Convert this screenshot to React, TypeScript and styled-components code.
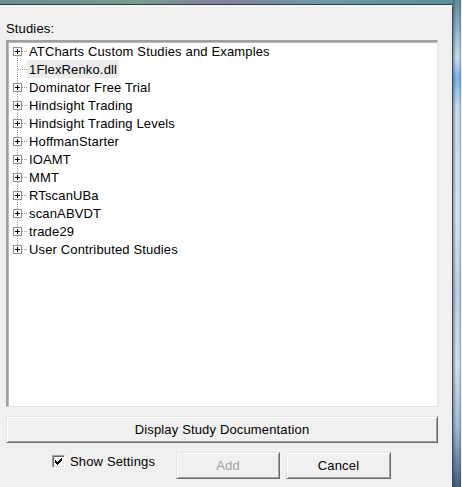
import React from 'react';
import styled, { createGlobalStyle } from 'styled-components';

const GlobalStyle = createGlobalStyle`
  html, body {
    margin: 0;
    padding: 0;
    background: #f0f0f0;
  }
  body {
    font-family: "Liberation Sans", Arial, sans-serif;
    font-size: 13px;
    letter-spacing: 0.15px;
    color: #000;
  }
`;

const Window = styled.div`
  width: 462px;
  height: 487px;
  display: flex;
  flex-direction: column;
  overflow: hidden;
`;

const TopFrame = styled.div`
  height: 4px;
  flex: none;
  background: linear-gradient(90deg, #6b8f92 0%, #7a9a8f 30%, #86819e 50%, #6f9aa0 70%, #5f8f96 100%);
  border-bottom: 1px solid #2e3d42;
  margin-right: 8px;
`;

const Body = styled.div`
  flex: 1;
  display: flex;
  min-height: 0;
`;

const Client = styled.div`
  width: 453px;
  flex: none;
  background: #f0f0f0;
  border-top: 1px solid #f8f8f8;
  border-right: 1px solid #3a4a50;
  box-sizing: border-box;
  padding: 15px 14px 0 6px;
  display: flex;
  flex-direction: column;
`;

const GlassStrip = styled.div`
  width: 8px;
  flex: none;
  margin-top: -5px;
  background:
    linear-gradient(90deg, rgba(40, 60, 80, 0.45) 0%, rgba(255, 255, 255, 0) 40%, rgba(255, 255, 255, 0) 70%, rgba(40, 60, 80, 0.35) 100%),
    linear-gradient(180deg, #5f8c96 0%, #8fb4c8 6%, #c9dcee 12%, #78b2ee 16%, #c6dbef 22%, #d3e3f2 45%, #b9cfe3 60%, #cddff0 75%, #9fb8cf 88%, #40607e 100%);
`;

const Label = styled.div`
  height: 15px;
  line-height: 15px;
  margin-bottom: 4px;
`;

const ListBox = styled.div`
  height: 367px;
  box-sizing: border-box;
  background: #fff;
  border-top: 2px solid #a0a0a0;
  border-left: 2px solid #a0a0a0;
  border-right: 1px solid #e3e3e3;
  border-bottom: 1px solid #e3e3e3;
  box-shadow: inset 1px 1px 0 #b9b9b9;
  display: flex;
  flex-direction: column;
`;

const Row = styled.div`
  height: 18px;
  display: flex;
  align-items: flex-start;
`;

const RowText = styled.span<{ $focused?: boolean }>`
  height: 16px;
  padding: 2px 2px 0;
  line-height: 16px;
  background: ${(p) => (p.$focused ? '#ececec' : 'transparent')};
  white-space: nowrap;
`;

const WideButton = styled.button`
  margin-top: 9px;
  height: 27px;
  width: 100%;
  font: inherit;
  letter-spacing: inherit;
  color: #000;
  background: #f0f0f0;
  border-top: 1px solid #e3e3e3;
  border-left: 1px solid #e3e3e3;
  border-right: 1px solid #696969;
  border-bottom: 1px solid #696969;
  box-shadow: inset 1px 1px 0 #fff, inset -1px -1px 0 #a0a0a0;
  padding: 0;
`;

const BottomRow = styled.div`
  margin-top: 9px;
  display: flex;
  align-items: flex-start;
`;

const CheckLabel = styled.label`
  display: flex;
  align-items: center;
  gap: 5px;
  width: 102px;
  flex: none;
  white-space: nowrap;
  margin-left: 46px;
  margin-top: 3px;
  height: 13px;
`;

const CheckBox = styled.span`
  width: 13px;
  height: 13px;
  flex: none;
  box-sizing: border-box;
  background: #fff;
  border-top: 1px solid #a0a0a0;
  border-left: 1px solid #a0a0a0;
  border-right: 1px solid #fff;
  border-bottom: 1px solid #fff;
  box-shadow: inset 1px 1px 0 #696969, inset -1px -1px 0 #e3e3e3;
  display: flex;
  align-items: center;
  justify-content: center;
`;

const DialogButton = styled.button<{ $width: number; $gap: number }>`
  width: ${(p) => p.$width}px;
  flex: none;
  margin-left: ${(p) => p.$gap}px;
  height: 27px;
  font: inherit;
  letter-spacing: inherit;
  color: ${(p) => (p.disabled ? '#a0a0a0' : '#000')};
  background: #f0f0f0;
  border-top: 1px solid #e3e3e3;
  border-left: 1px solid #e3e3e3;
  border-right: 1px solid #696969;
  border-bottom: 1px solid #696969;
  box-shadow: inset 1px 1px 0 #fff, inset -1px -1px 0 #a0a0a0;
  padding: 0;
`;

type Item = { name: string; expandable: boolean; focused?: boolean };

const items: Item[] = [
  { name: 'ATCharts Custom Studies and Examples', expandable: true },
  { name: '1FlexRenko.dll', expandable: false, focused: true },
  { name: 'Dominator Free Trial', expandable: true },
  { name: 'Hindsight Trading', expandable: true },
  { name: 'Hindsight Trading Levels', expandable: true },
  { name: 'HoffmanStarter', expandable: true },
  { name: 'IOAMT', expandable: true },
  { name: 'MMT', expandable: true },
  { name: 'RTscanUBa', expandable: true },
  { name: 'scanABVDT', expandable: true },
  { name: 'trade29', expandable: true },
  { name: 'User Contributed Studies', expandable: true },
];

function TreeGutter({ expandable, first, last }: { expandable: boolean; first: boolean; last: boolean }) {
  const dot = { stroke: '#a0a0a0', strokeWidth: 1, strokeDasharray: '1 1' };
  return (
    <svg width="19" height="18" viewBox="0 0 19 18" shapeRendering="crispEdges" style={{ flex: 'none' }}>
      {expandable ? (
        <>
          {!first && <line x1="9.5" y1="0" x2="9.5" y2="5" {...dot} />}
          {!last && <line x1="9.5" y1="14" x2="9.5" y2="18" {...dot} />}
          <line x1="14" y1="9.5" x2="19" y2="9.5" {...dot} />
          <rect x="5.5" y="5.5" width="8" height="8" fill="#fff" stroke="#919191" />
          <line x1="7" y1="9.5" x2="12" y2="9.5" stroke="#000" />
          <line x1="9.5" y1="7" x2="9.5" y2="12" stroke="#000" />
        </>
      ) : (
        <>
          <line x1="9.5" y1="0" x2="9.5" y2={last ? 9 : 18} {...dot} />
          <line x1="10" y1="9.5" x2="19" y2="9.5" {...dot} />
        </>
      )}
    </svg>
  );
}

export default function App() {
  return (
    <Window>
      <GlobalStyle />
      <TopFrame />
      <Body>
        <Client>
          <Label>Studies:</Label>
          <ListBox>
            {items.map((it, i) => (
              <Row key={it.name}>
                <TreeGutter expandable={it.expandable} first={i === 0} last={i === items.length - 1} />
                <RowText $focused={it.focused}>{it.name}</RowText>
              </Row>
            ))}
          </ListBox>
          <WideButton>Display Study Documentation</WideButton>
          <BottomRow>
            <CheckLabel>
              <CheckBox>
                <svg width="7" height="7" viewBox="0 0 7 7" shapeRendering="crispEdges">
                  <path d="M0 2h1v1h1v1h1v-1h1v-1h1v-1h1v-1h1v3h-1v1h-1v1h-1v1h-1v1h-1v-1h-1v-1h-1z" fill="#000" />
                </svg>
              </CheckBox>
              <span>Show Settings</span>
            </CheckLabel>
            <DialogButton $width={104} $gap={22} disabled>
              Add
            </DialogButton>
            <DialogButton $width={105} $gap={6}>
              Cancel
            </DialogButton>
          </BottomRow>
        </Client>
        <GlassStrip />
      </Body>
    </Window>
  );
}
